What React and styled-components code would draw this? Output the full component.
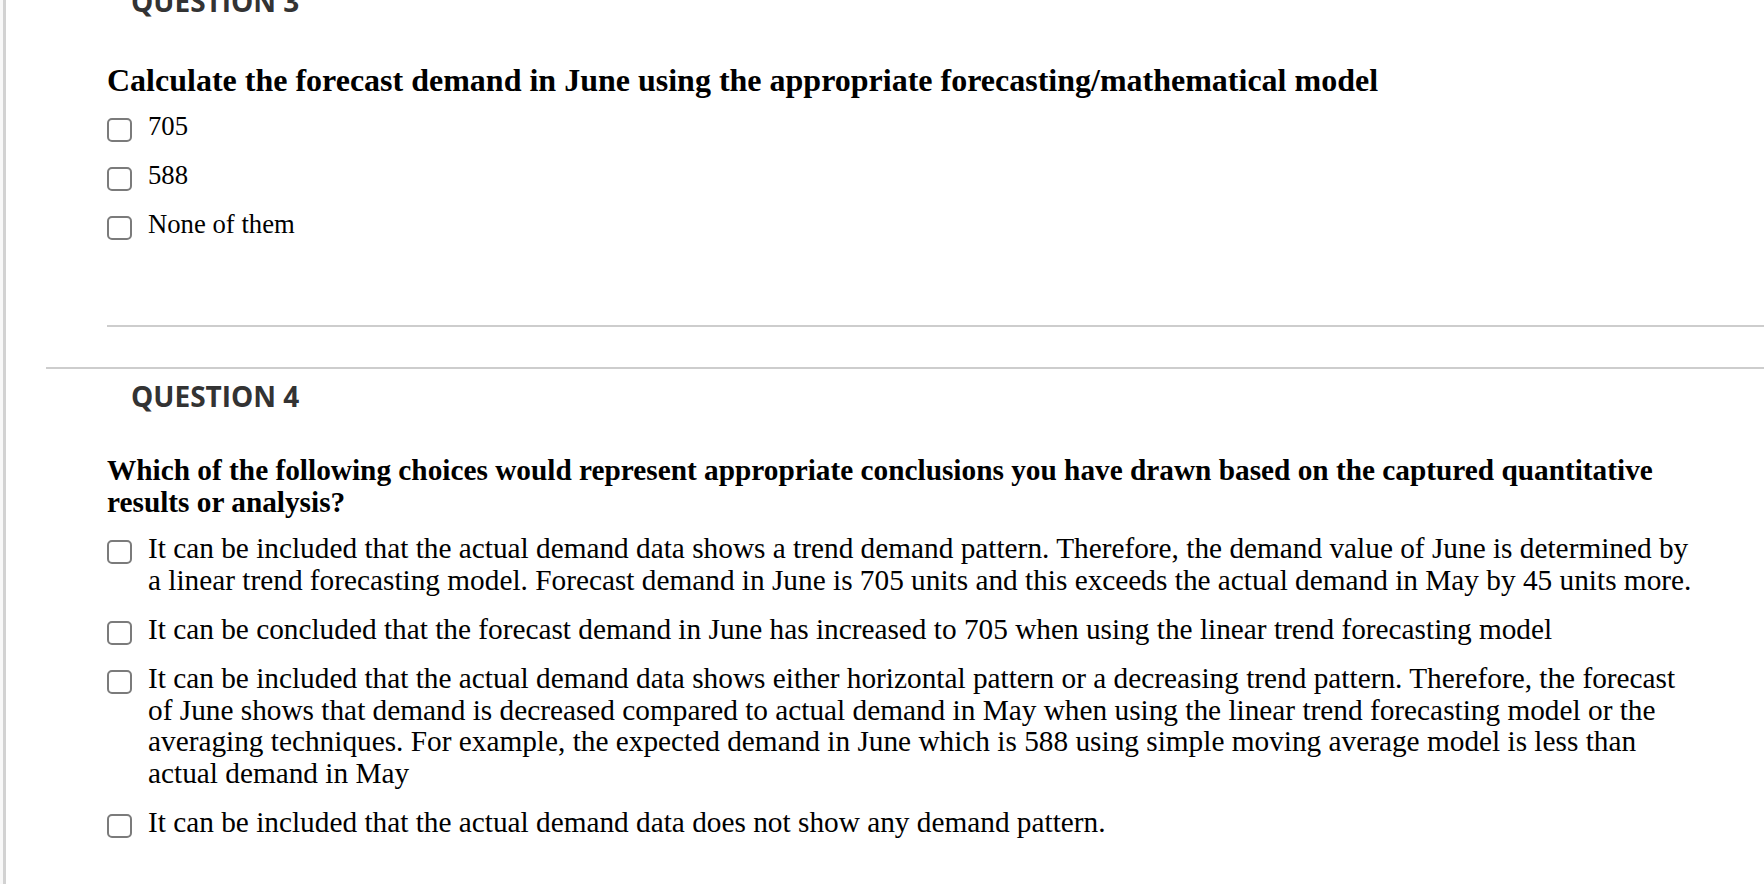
import React from 'react';
import styled, { createGlobalStyle } from 'styled-components';

const GlobalStyle = createGlobalStyle`
html, body {
  margin: 0;
  padding: 0;
  background: #fff;
  overflow: hidden;
}
`

const Shell = styled.div`
display: flex;
min-height: 100vh;
background: #f8f8f8;
padding-left: 3px;
`

const Panel = styled.div`
flex: 1;
background: #fff;
border-left: 3px solid #d2d2d2;
padding-left: 40px;
`

const Section = styled.section`
border-top: 2px solid #cdcdcd;
margin-top: ${({ $offset }) => $offset || 0}px;
`

const Heading = styled.h3`
margin: 0;
padding: 9px 0 0 85px;
font-family: "Open Sans", "Liberation Sans", sans-serif;
font-weight: 700;
font-size: 28px;
line-height: 36.8px;
color: #333;
`

const Body = styled.div`
margin: 0 0 40px 61px;
padding: ${({ $top }) => $top}px 64px 84px 0;
border-bottom: 2px solid #cdcdcd;
`

const Prompt = styled.p`
margin: 0;
font-family: "Liberation Serif", "Times New Roman", serif;
font-weight: 700;
font-size: ${({ $size }) => $size}px;
line-height: 31.7px;
color: #000;
`

const Options = styled.ul`
list-style: none;
margin: 14.7px 0 0;
padding: 0;
display: flex;
flex-direction: column;
gap: 17.3px;
`

const Option = styled.li`
display: flex;
align-items: flex-start;
gap: 16px;
`

const Box = styled.span`
flex-shrink: 0;
width: 25px;
height: 24px;
margin-top: 6.6px;
box-sizing: border-box;
border: 2px solid #7b7b7b;
border-radius: 5px;
background: #fff;
`

const Label = styled.span`
font-family: "Liberation Serif", "Times New Roman", serif;
font-size: ${({ $size }) => $size}px;
line-height: 31.7px;
color: #000;
`

const questions = [
  {
    num: 3,
    offset: -28,
    top: 45,
    promptSize: 32,
    optionSize: 26.7,
    prompt: 'Calculate the forecast demand in June using the appropriate forecasting/mathematical model',
    options: ['705', '588', 'None of them'],
  },
  {
    num: 4,
    offset: 0,
    top: 40.5,
    promptSize: 29.3,
    optionSize: 29.3,
    prompt: 'Which of the following choices would represent appropriate conclusions you have drawn based on the captured quantitative results or analysis?',
    options: [
      'It can be included that the actual demand data shows a trend demand pattern. Therefore, the demand value of June is determined by a linear trend forecasting model. Forecast demand in June is 705 units and this exceeds the actual demand in May by 45 units more.',
      'It can be concluded that the forecast demand in June has increased to 705 when using the linear trend forecasting model',
      'It can be included that the actual demand data shows either horizontal pattern or a decreasing trend pattern. Therefore, the forecast of June shows that demand is decreased compared to actual demand in May when using the linear trend forecasting model or the averaging techniques. For example, the expected demand in June which is 588 using simple moving average model is less than actual demand in May',
      'It can be included that the actual demand data does not show any demand pattern.',
    ],
  },
]

const App = () => {
  return (
    <Shell>
      <GlobalStyle />
      <Panel>
        {questions.map((q) => (
          <Section key={q.num} $offset={q.offset}>
            <Heading>QUESTION {q.num}</Heading>
            <Body $top={q.top}>
              <Prompt $size={q.promptSize}>{q.prompt}</Prompt>
              <Options>
                {q.options.map((opt) => (
                  <Option key={opt}>
                    <Box />
                    <Label $size={q.optionSize}>{opt}</Label>
                  </Option>
                ))}
              </Options>
            </Body>
          </Section>
        ))}
      </Panel>
    </Shell>
  );
};

export default App;
